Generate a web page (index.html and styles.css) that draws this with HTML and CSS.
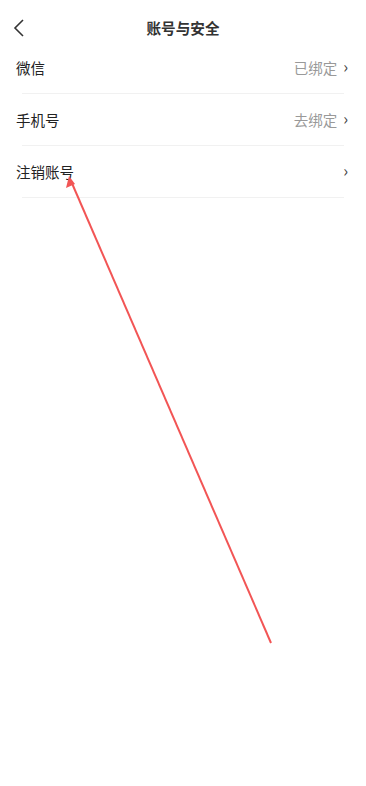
FILE: index.html
```html
<!DOCTYPE html>
<html>
  <head>
    <title>账号与安全</title>
    <link rel="stylesheet" href="styles.css">
  </head>
  <body>
    <div class="page">
      <header class="nav">
        <span class="back">
          <svg width="12" height="18" viewBox="0 0 12 18"><path d="M10 1 L2 9 L10 17" fill="none" stroke="#333" stroke-width="1.6"/></svg>
        </span>
        <h1 class="title">账号与安全</h1>
      </header>
      <ul class="list">
        <li class="row">
          <span class="label">微信</span>
          <span class="value">已绑定</span>
          <span class="arrow">›</span>
        </li>
        <li class="row">
          <span class="label">手机号</span>
          <span class="value">去绑定</span>
          <span class="arrow">›</span>
        </li>
        <li class="row">
          <span class="label">注销账号</span>
          <span class="value"></span>
          <span class="arrow">›</span>
        </li>
      </ul>
      <!-- annotation arrow drawn over the screenshot -->
      <svg class="mark" width="366" height="786" viewBox="0 0 366 786">
        <line x1="271" y1="643" x2="71" y2="181" stroke="#f25555" stroke-width="2"/>
        <path d="M69 176 L66 188 L75 184 Z" fill="#f25555"/>
      </svg>
    </div>
  </body>
</html>
```

FILE: styles.css
```css
* {
  box-sizing: border-box;
  margin: 0;
  padding: 0;
}
body {
  background: #fff;
  font-family: "Noto Sans CJK SC", "Noto Sans", sans-serif;
  color: #222;
}
.page {
  position: relative;
  width: 366px;
  height: 786px;
  overflow: hidden;
}
.nav {
  height: 42px;
  display: flex;
  align-items: center;
  justify-content: center;
  position: relative;
  padding-top: 14px;
}
.back {
  position: absolute;
  left: 13px;
  top: 19px;
  display: flex;
}
.title {
  font-size: 14.6px;
  font-weight: 700;
  color: #333;
  line-height: 20px;
}
.list {
  list-style: none;
}
.row {
  display: flex;
  align-items: center;
  height: 52px;
  padding: 0 18px 2px 16px;
  position: relative;
}
.row::after {
  content: "";
  position: absolute;
  left: 22px;
  right: 22px;
  bottom: 0;
  border-bottom: 1px solid #f1f1f1;
}
.label {
  font-size: 14.5px;
  color: #222;
  flex: 1;
}
.value {
  font-size: 14.5px;
  color: #999;
  margin-right: 6px;
}
.arrow {
  font-size: 16px;
  color: #444;
  line-height: 16px;
  margin-top: -2px;
}
.mark {
  position: absolute;
  left: 0;
  top: 0;
  pointer-events: none;
}
```
